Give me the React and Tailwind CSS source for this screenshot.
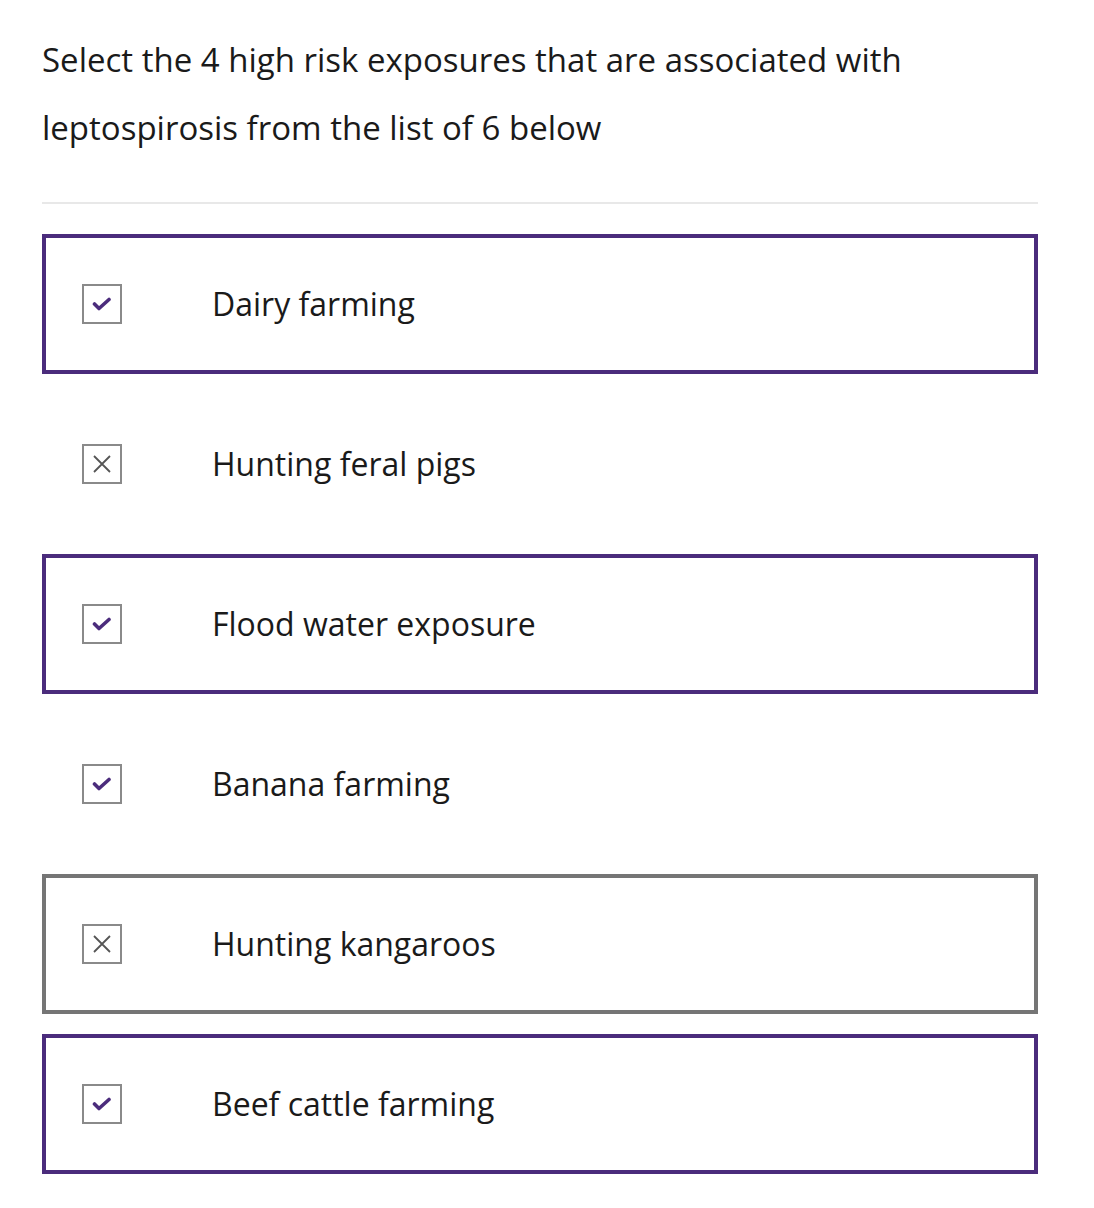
import React from "react";

const options = [
  { label: "Dairy farming", checked: true, frame: "purple" },
  { label: "Hunting feral pigs", checked: false, frame: "none" },
  { label: "Flood water exposure", checked: true, frame: "purple" },
  { label: "Banana farming", checked: true, frame: "none" },
  { label: "Hunting kangaroos", checked: false, frame: "gray" },
  { label: "Beef cattle farming", checked: true, frame: "purple" },
];

function CheckMark() {
  return (
    <svg width="20" height="16" viewBox="0 0 20 16" fill="none">
      <path
        d="M2.5 8 L7 12.5 L17 3.5"
        stroke="#4b2c7c"
        strokeWidth="3.6"
        strokeLinecap="round"
        strokeLinejoin="round"
      />
    </svg>
  );
}

function Cross() {
  return (
    <svg width="20" height="20" viewBox="0 0 20 20" fill="none">
      <path d="M2 2 L18 18 M18 2 L2 18" stroke="#555" strokeWidth="1.8" />
    </svg>
  );
}

function Option({ label, checked, frame }) {
  const border =
    frame === "purple"
      ? "border-[#4b2c7c]"
      : frame === "gray"
      ? "border-[#757575]"
      : "border-transparent";
  return (
    <div className={`flex h-[140px] items-center border-4 ${border}`}>
      <div className="ml-9 flex h-10 w-10 items-center justify-center border-2 border-[#8a8a8a] bg-white">
        {checked ? <CheckMark /> : <Cross />}
      </div>
      <span className="ml-[90px] text-[32px] text-[#1a1a1a]">{label}</span>
    </div>
  );
}

export default function App() {
  return (
    <div
      className="min-h-screen bg-white px-[42px] pt-[26px]"
      style={{ fontFamily: '"Open Sans", "Liberation Sans", sans-serif' }}
    >
      <p className="w-[996px] text-[33px] leading-[68px] text-[#1a1a1a]">
        Select the 4 high risk exposures that are associated with leptospirosis from the list of 6 below
      </p>
      <div className="mt-10 h-[2px] w-[996px] bg-[#e8e8e8]" />
      <div className="mt-[30px] flex w-[996px] flex-col gap-5">
        {options.map((o) => (
          <Option key={o.label} {...o} />
        ))}
      </div>
    </div>
  );
}
